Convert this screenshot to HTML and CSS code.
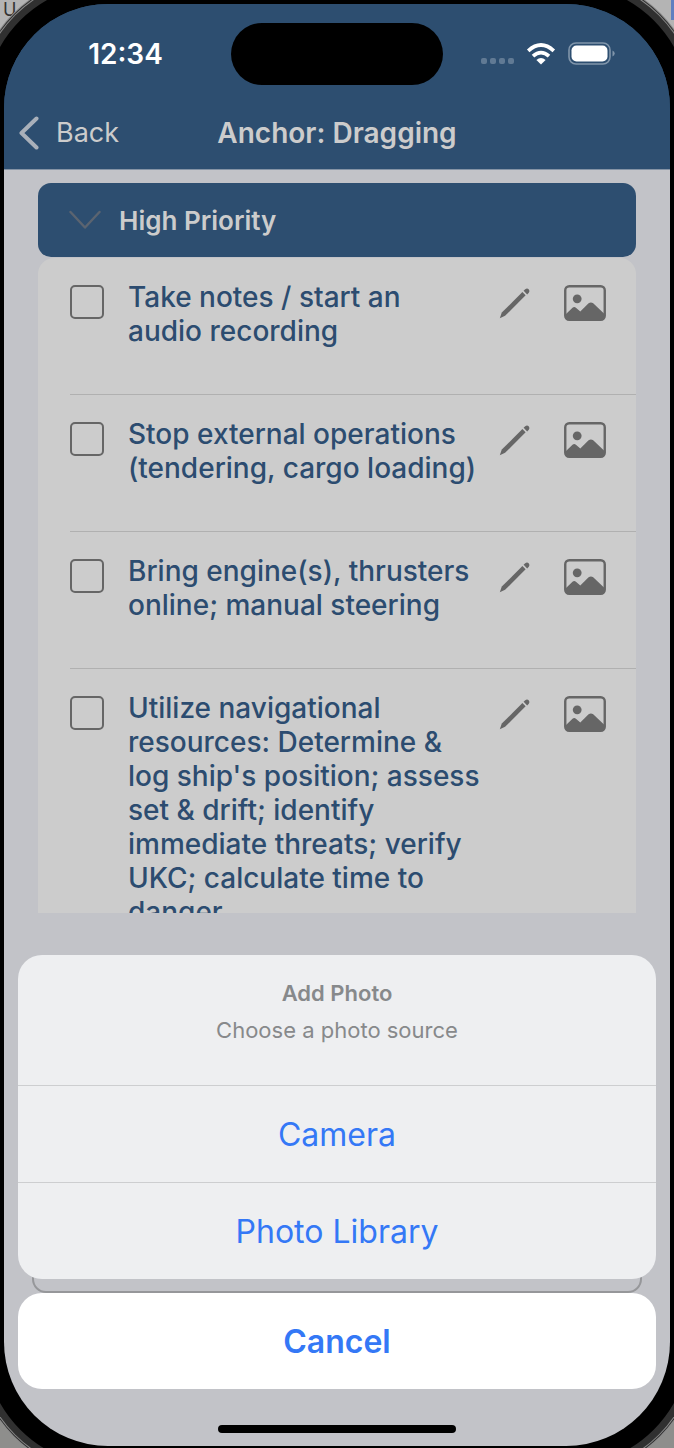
FILE: index.html
```html
<!DOCTYPE html>
<html lang="en">
<head>
<meta charset="utf-8">
<meta name="viewport" content="width=device-width, initial-scale=1">
<title>Anchor: Dragging</title>
<link rel="stylesheet" href="styles.css">
</head>
<body>
<svg class="defs" aria-hidden="true">
  <symbol id="pencil" viewBox="0 0 32 32">
    <path d="M.8 31.200l2-5.600L23.400 5l3.200 3.200L6.100 28.800z"/>
    <path d="M24.600 3.800l1.600-1.600q2-1.400 3.500.1t.1 3.500L28.200 7.400z"/>
  </symbol>
  <symbol id="photo" viewBox="0 0 42 36">
    <rect x="1.250" y="1.250" width="39.500" height="33.500" rx="4" fill="none" stroke="currentColor" stroke-width="2.400"/>
    <circle cx="13.200" cy="13.800" r="4.400"/>
    <path d="M1.500 29.500l7-6.700q1.800-1.500 3.400 0l4.400 3.800 8.300-8.300q2.300-1.800 4.600 0L40.500 29v2.500q0 3.500-3.500 3.500H5q-3.500 0-3.500-3.500z"/>
  </symbol>
</svg>
<span class="desk-text" aria-hidden="true">U</span>
<span class="desk-tab"></span>
<div class="device">
  <div class="screen">
    <header class="top">
      <div class="status">
        <span class="time">12:34</span>
        <span class="island"></span>
        <div class="signals">
          <span class="dots"><i></i><i></i><i></i><i></i></span>
          <svg class="wifi" viewBox="0 0 30 22" aria-label="Wi-Fi">
            <g fill="none" stroke="#fff" stroke-width="3.700">
              <path d="M2.200 7.800Q15-3.800 27.800 7.800"/>
              <path d="M7 13.200q8-7.200 16 0"/>
            </g>
            <path fill="#fff" d="M15 21.500l-4.600-4.600q4.600-3.700 9.200 0z"/>
          </svg>
          <svg class="battery" viewBox="0 0 47 24" aria-label="Battery full">
            <rect x="1" y="1" width="41" height="21" rx="7" fill="none" stroke="#8196ab" stroke-width="1.600"/>
            <rect x="3.500" y="3.500" width="36" height="16" rx="5" fill="#fff"/>
            <path fill="#8196ab" d="M44.500 8.500q2.200 1 2.200 3t-2.200 3z"/>
          </svg>
        </div>
      </div>
      <nav class="nav">
        <button class="back" type="button">
          <svg viewBox="0 0 20 34" aria-hidden="true"><path d="M17.500 2.500L2.500 17l15 14.500" fill="none" stroke="#a9b0ba" stroke-width="4" stroke-linecap="round" stroke-linejoin="round"/></svg>
          Back
        </button>
        <h1>Anchor: Dragging</h1>
      </nav>
    </header>
    <main class="content">
      <button class="section" type="button" aria-expanded="true">
        <svg viewBox="0 0 32 20" aria-hidden="true"><path d="M1.500 2L16 17.500 30.500 2" fill="none" stroke="#5b6470" stroke-width="2.400" stroke-linecap="round" stroke-linejoin="round"/></svg>
        High Priority
      </button>
      <ul class="list">
        <li>
          <input type="checkbox" id="c1"><label for="c1">Take notes / start an<br>audio recording</label>
          <button class="icon" type="button" aria-label="Edit"><svg class="pencil"><use href="#pencil"/></svg></button>
          <button class="icon" type="button" aria-label="Add photo"><svg class="photo"><use href="#photo"/></svg></button>
        </li>
        <li>
          <input type="checkbox" id="c2"><label for="c2">Stop external operations (tendering, cargo loading)</label>
          <button class="icon" type="button" aria-label="Edit"><svg class="pencil"><use href="#pencil"/></svg></button>
          <button class="icon" type="button" aria-label="Add photo"><svg class="photo"><use href="#photo"/></svg></button>
        </li>
        <li>
          <input type="checkbox" id="c3"><label for="c3">Bring engine(s), thrusters online; manual steering</label>
          <button class="icon" type="button" aria-label="Edit"><svg class="pencil"><use href="#pencil"/></svg></button>
          <button class="icon" type="button" aria-label="Add photo"><svg class="photo"><use href="#photo"/></svg></button>
        </li>
        <li>
          <input type="checkbox" id="c4"><label for="c4">Utilize navigational resources: Determine &amp; log ship's position; assess set &amp; drift; identify immediate threats; verify UKC; calculate time to danger</label>
          <button class="icon" type="button" aria-label="Edit"><svg class="pencil"><use href="#pencil"/></svg></button>
          <button class="icon" type="button" aria-label="Add photo"><svg class="photo"><use href="#photo"/></svg></button>
        </li>
      </ul>
    </main>
    <div class="panel"></div>
    <div class="overlay" role="dialog" aria-labelledby="sheet-title">
      <div class="sheet">
        <div class="sheet-head">
          <h2 id="sheet-title">Add Photo</h2>
          <p>Choose a photo source</p>
        </div>
        <button type="button">Camera</button>
        <button type="button">Photo Library</button>
      </div>
      <button class="cancel" type="button">Cancel</button>
      <span class="home"></span>
    </div>
  </div>
</div>
</body>
</html>
```

FILE: styles.css
```css
* { box-sizing: border-box; }

body {
  margin: 0;
  min-height: 100vh;
  display: flex;
  position: relative;
  overflow: hidden;
  background: linear-gradient(#b4b4b4 50%, #8e8e8c 50%);
  font-family: Inter, "Liberation Sans", sans-serif;
}

button {
  margin: 0;
  padding: 0;
  border: 0;
  background: none;
  font: inherit;
  color: inherit;
}

h1, h2, p, ul { margin: 0; padding: 0; }

.defs { position: absolute; width: 0; height: 0; }

.desk-text {
  position: absolute;
  top: 0;
  left: 3px;
  font-size: 18px;
  line-height: 20px;
  color: #333;
}

.desk-tab {
  position: absolute;
  top: 0;
  right: 0;
  width: 3px;
  height: 20px;
  background: #5f7fc0;
}

.device {
  flex: 1;
  display: flex;
  position: relative;
  margin: -16px -16px -18px;
  border: 20px solid #000;
  border-radius: 124px;
  background: #000;
  box-shadow: 0 0 0 7px #303030, 0 0 0 8px #8c8c8c, 0 0 0 9px #303030, 0 0 0 10px #8c8c8c;
}

.screen {
  flex: 1;
  min-width: 0;
  display: flex;
  flex-direction: column;
  position: relative;
  overflow: hidden;
  border-radius: 104px;
  background: linear-gradient(#2d4e70 150px, #c2c3c8 150px);
}

.top {
  background: #2d4e70;
  color: #cccccc;
  border-bottom: 1px solid #8493a5;
}

.status {
  display: grid;
  grid-template-columns: 1fr 212px 1fr;
  align-items: center;
  height: 100px;
}

.time {
  padding-left: 16px;
  text-align: center;
  font-size: 28px;
  font-weight: 600;
  color: #fff;
}

.island {
  height: 62px;
  border-radius: 31px;
  background: #000;
}

.signals {
  display: flex;
  justify-content: flex-end;
  align-items: center;
  gap: 12px;
  padding-right: 55px;
}

.dots { display: flex; gap: 3px; padding-top: 14px; }
.dots i { width: 6px; height: 6px; border-radius: 2px; background: #617a94; }
.wifi { width: 30px; height: 22px; }
.battery { width: 47px; height: 24px; }

.nav {
  display: grid;
  grid-template-columns: 1fr auto 1fr;
  align-items: center;
  height: 65px;
  padding: 0 15px 8px;
  font-size: 27px;
}

.nav h1 { font-size: 28px; font-weight: 600; }

.back {
  display: flex;
  align-items: center;
  gap: 17px;
}

.back svg { width: 20px; height: 34px; }

.content {
  flex: 1 1 0;
  min-height: 0;
  display: flex;
  flex-direction: column;
  gap: 1px;
  overflow: hidden;
  margin: 13px 34px 0;
}

.section {
  flex: none;
  display: flex;
  align-items: center;
  gap: 18px;
  height: 74px;
  padding: 0 31px;
  border-radius: 13px;
  background: #2d4e70;
  color: #cccccc;
  font-size: 26px;
  font-weight: 600;
}

.section svg { width: 32px; height: 20px; }

.list {
  flex: 1 0 auto;
  list-style: none;
  padding-left: 32px;
  border-radius: 16px 16px 0 0;
  background: #cccccc;
}

.list li {
  display: grid;
  grid-template-columns: 34px 1fr 65px 42px;
  align-items: start;
  min-height: 137px;
  padding: 22px 30px 20px 0;
  border-bottom: 1px solid #b0b0b0;
}

.list input {
  appearance: none;
  width: 34px;
  height: 34px;
  margin: 5px 0 0;
  border: 2px solid #666;
  border-radius: 5px;
}

.list label {
  padding: 0 14px 0 24px;
  color: #2c4c70;
  font-size: 28px;
  font-weight: 500;
  line-height: 34px;
}

.icon { display: flex; color: #666; fill: currentColor; }
.pencil { width: 32px; height: 32px; margin-top: 7px; }
.photo { width: 42px; height: 36px; margin-top: 5px; }

.panel {
  flex: none;
  height: 318px;
  margin: 62px 28px 153px;
  border: 2px solid #96979a;
  border-radius: 14px;
}

.overlay {
  position: absolute;
  inset: auto 0 0;
  display: flex;
  flex-direction: column;
  gap: 14px;
  padding: 0 14px 13px;
}

.sheet {
  display: flex;
  flex-direction: column;
  overflow: hidden;
  border-radius: 24px;
  background: #eeeff1;
  color: #3478f6;
  text-align: center;
}

.sheet-head {
  height: 130px;
  padding-top: 23px;
  color: #87898b;
  font-size: 22px;
  line-height: 30px;
}

.sheet-head h2 { margin-bottom: 7px; font-size: 22px; font-weight: 600; }

.sheet button {
  height: 97px;
  border-top: 1px solid #cdced0;
  font-size: 32px;
}

.cancel {
  height: 96px;
  border-radius: 24px;
  background: #fff;
  color: #3478f6;
  font-size: 32px;
  font-weight: 600;
}

.home {
  align-self: center;
  width: 238px;
  height: 8px;
  margin-top: 22px;
  border-radius: 4px;
  background: #000;
}
```
